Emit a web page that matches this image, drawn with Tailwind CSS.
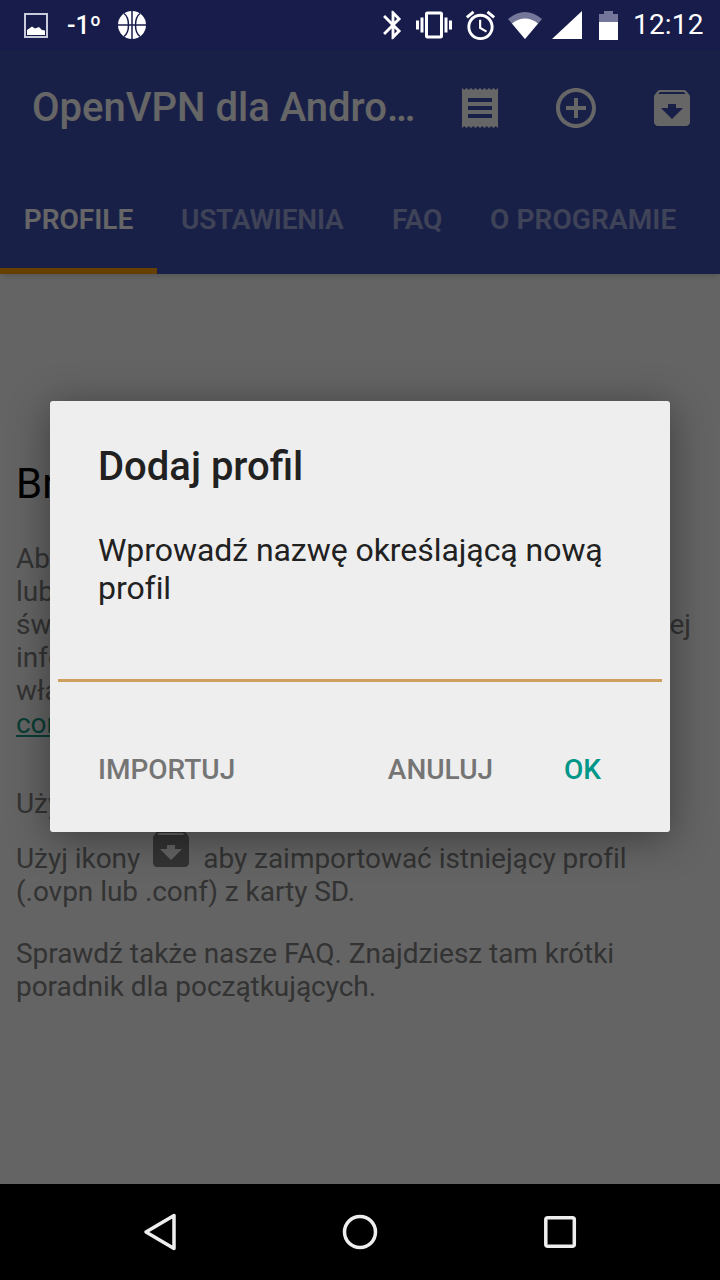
<!DOCTYPE html>
<html lang="pl">
<head>
    <meta charset="UTF-8">
    <meta name="viewport" content="width=device-width, initial-scale=1.0">
    <title>OpenVPN dla Androida</title>
    <script src="https://cdn.jsdelivr.net/npm/@tailwindcss/browser@4"></script>
</head>
<body class="bg-black">
<div class="relative flex flex-col w-[720px] h-[1280px] overflow-hidden font-[Roboto,sans-serif]">

    <!-- Status bar -->
    <div class="flex items-center h-[50px] shrink-0 bg-[#181c4a] text-white relative z-20">
        <svg class="ml-[24px] w-[24px] h-[25px]" viewBox="0 0 24 25">
            <rect x="1" y="1" width="22" height="23" fill="none" stroke="#c9cbdc" stroke-width="2"/>
            <path d="M3 22v-5l5-3.5 3 2 4-1.500 3 3 3 .5V22z" fill="#fff"/>
        </svg>
        <span class="ml-[19px] w-[36px] text-[25px] leading-none font-medium whitespace-nowrap">-1º</span>
        <svg class="ml-[15px] w-[28px] h-[28px]" viewBox="0 0 28 28">
            <circle cx="14" cy="14" r="14" fill="#fff"/>
            <path d="M0 14h28M14 0v28M6 2.500c4 3 4.500 7.500 4.500 11.500s-.5 8.500-4.500 11.500M22 2.500c-4 3-4.500 7.500-4.500 11.500s.5 8.500 4.500 11.500" fill="none" stroke="#181c4a" stroke-width="1.500"/>
        </svg>
        <svg class="ml-[230px] w-[34px] h-[34px] fill-white" viewBox="0 0 24 24"><path d="M17.710 7.710L12 2h-1v7.590L6.410 5 5 6.410 10.590 12 5 17.590 6.410 19 11 14.410V22h1l5.710-5.710-4.300-4.290 4.300-4.290zM13 5.830l1.880 1.880L13 9.590V5.830zm1.880 10.460L13 18.170v-3.760l1.880 1.880z"/></svg>
        <svg class="ml-[6px] w-[36px] h-[36px] fill-white" viewBox="0 0 24 24"><path d="M0 15h2V9H0v6zm3 2h2V7H3v10zm19-8v6h2V9h-2zm-3 8h2V7h-2v10zM16.500 3h-9C6.670 3 6 3.670 6 4.500v15c0 .83.67 1.500 1.500 1.500h9c.83 0 1.500-.67 1.500-1.500v-15c0-.83-.67-1.500-1.500-1.500zM16 19H8V5h8v14z"/></svg>
        <svg class="ml-[11px] w-[35px] h-[35px] fill-white" viewBox="0 0 24 24"><path d="M22 5.720l-4.600-3.860-1.290 1.530 4.600 3.860L22 5.720zM7.880 3.390L6.600 1.860 2 5.710l1.290 1.530 4.590-3.850zM12.500 8H11v6l4.750 2.850.75-1.230-4-2.370V8zM12 4c-4.970 0-9 4.030-9 9s4.030 9 9 9 9-4.030 9-9-4.030-9-9-9zm0 16c-3.870 0-7-3.130-7-7s3.130-7 7-7 7 3.130 7 7-3.130 7-7 7z"/></svg>
        <svg class="ml-[10px] w-[34px] h-[28px]" viewBox="0 0 34 28">
            <path d="M0 8Q17-6 34 8L17 28Z" fill="#74779a"/>
            <path d="M4 12.500Q17 2.500 30 12.500L17 28Z" fill="#fff"/>
        </svg>
        <svg class="ml-[10px] w-[30px] h-[28px]" viewBox="0 0 30 28"><path d="M30 0V28H0Z" fill="#fff"/></svg>
        <svg class="ml-[17px] w-[19px] h-[29px]" viewBox="0 0 19 29">
            <path d="M0 3h5V0h9v3h5v9H0z" fill="#74779a"/>
            <path d="M0 11h19v18H0z" fill="#fff"/>
        </svg>
        <span class="ml-[15px] text-[28px] leading-none tracking-[0.2px] whitespace-nowrap">12:12</span>
    </div>

    <!-- App bar + tabs -->
    <div class="h-[224px] shrink-0 flex flex-col bg-[#3f51b5] shadow-md relative z-0">
        <div class="flex items-center h-[116px]">
            <span class="ml-[32px] w-[424px] text-[40px] leading-none font-medium text-white whitespace-nowrap">OpenVPN dla Andro…</span>
            <svg class="w-[36px] h-[40px] ml-[6px] fill-white" viewBox="0 0 36 40">
                <path fill-rule="evenodd" d="M0 0l2.250 2 2.250-2 2.250 2 2.250-2 2.250 2 2.250-2 2.250 2 2.250-2 2.250 2 2.250-2 2.250 2 2.250-2 2.250 2 2.250-2 2.250 2 2.250-2V40l-2.250-2-2.250 2-2.250-2-2.250 2-2.250-2-2.250 2-2.250-2-2.250 2-2.250-2-2.250 2-2.250-2-2.250 2-2.250-2-2.250 2-2.250-2-2.250 2zM6 10v4h24v-4zM6 18v4h24v-4zM6 26v4h24v-4z"/>
            </svg>
            <svg class="w-[48px] h-[48px] ml-[54px] fill-white" viewBox="0 0 24 24"><path d="M13 7h-2v4H7v2h4v4h2v-4h4v-2h-4V7zm-1-5C6.480 2 2 6.480 2 12s4.480 10 10 10 10-4.480 10-10S17.520 2 12 2zm0 18c-4.410 0-8-3.590-8-8s3.590-8 8-8 8 3.590 8 8-3.590 8-8 8z"/></svg>
            <svg class="w-[48px] h-[48px] ml-[48px] fill-white" viewBox="0 0 24 24"><path d="M20.540 5.230l-1.390-1.680C18.880 3.210 18.470 3 18 3H6c-.47 0-.88.21-1.160.55L3.460 5.230C3.170 5.570 3 6.020 3 6.500V19c0 1.100.9 2 2 2h14c1.100 0 2-.9 2-2V6.500c0-.48-.17-.93-.46-1.270zM12 17.500L6.500 12H10v-2h4v2h3.500L12 17.500zM5.120 5l.81-1h12l.94 1H5.120z"/></svg>
        </div>
        <div class="flex h-[108px] text-[28px] font-semibold leading-none tracking-[-0.2px] whitespace-nowrap">
            <div class="w-[157px] flex items-center justify-center border-b-[6px] border-[#ffa000] text-white pt-[6px] tracking-normal">PROFILE</div>
            <div class="flex items-center ml-[24px] w-[211px] text-white/50">USTAWIENIA</div>
            <div class="flex items-center w-[98px] text-white/50">FAQ</div>
            <div class="flex items-center text-white/50 tracking-[0.1px]">O PROGRAMIE</div>
        </div>
    </div>

    <!-- Page content -->
    <div class="flex-1 bg-[#fafafa] text-[28px] leading-[33px] tracking-[-0.04px] text-[#808080] pl-[16px] pr-[29px] pt-[185px] whitespace-nowrap">
        <h2 class="text-[42px] leading-[48px] mt-[1px] text-black">Brak profilu VPN</h2>
        <div class="mt-[34px]">Aby rozpocząć, musisz mieć profil OpenVPN</div>
        <div>lub plik konfiguracyjny od dostawcy VPN,</div>
        <div class="flex justify-between"><span>świadectwa i klucze klienta. Więcej</span><span>więcej</span></div>
        <div>informacji znajdziesz w poradniku</div>
        <div>właściciela serwera lub na stronie</div>
        <div class="text-[#1a9a85] underline">community.openvpn.net</div>
        <div class="mt-[47px]">Użyj ikony aby dodać nowy profil</div>
        <div class="mt-[22px] flex items-center h-[33px]">
            <span>Użyj ikony</span>
            <svg class="w-[48px] h-[48px] ml-[7px] mr-[8px] -mt-[20px] fill-[#808080]" viewBox="0 0 24 24"><path d="M20.540 5.230l-1.390-1.680C18.880 3.210 18.470 3 18 3H6c-.47 0-.88.21-1.160.55L3.460 5.230C3.170 5.570 3 6.020 3 6.500V19c0 1.100.9 2 2 2h14c1.100 0 2-.9 2-2V6.500c0-.48-.17-.93-.46-1.270zM12 17.500L6.500 12H10v-2h4v2h3.500L12 17.500zM5.120 5l.81-1h12l.94 1H5.120z"/></svg>
            <span>aby zaimportować istniejący profil</span>
        </div>
        <div>(.ovpn lub .conf) z karty SD.</div>
        <div class="mt-[29px]">Sprawdź także nasze FAQ. Znajdziesz tam krótki</div>
        <div>poradnik dla początkujących.</div>
    </div>

    <!-- Navigation bar -->
    <div class="h-[96px] shrink-0 bg-black flex items-center justify-center gap-[160px] relative z-20">
        <svg class="w-[40px] h-[40px]" viewBox="0 0 40 40"><path d="M6 20L34 3.500V36.500Z" fill="none" stroke="#eee" stroke-width="3.500" stroke-linejoin="round"/></svg>
        <svg class="w-[40px] h-[40px]" viewBox="0 0 40 40"><circle cx="20" cy="20" r="15.500" fill="none" stroke="#eee" stroke-width="3.500"/></svg>
        <svg class="w-[40px] h-[40px]" viewBox="0 0 40 40"><rect x="5.800" y="5.800" width="28.500" height="28.500" rx="2" fill="none" stroke="#eee" stroke-width="3.500"/></svg>
    </div>

    <!-- Scrim -->
    <div class="absolute left-0 right-0 top-[50px] bottom-[96px] bg-black/60 z-10"></div>

    <!-- Dialog -->
    <div class="absolute left-[50px] top-[401px] w-[620px] h-[431px] z-10 flex flex-col bg-[#eeeeee] rounded-[3px] shadow-[0_6px_40px_rgba(0,0,0,0.4)]">
        <h3 class="ml-[48px] mt-[42px] text-[40px] leading-[48px] font-medium text-[#212121]">Dodaj profil</h3>
        <p class="ml-[48px] mt-[40px] text-[32px] leading-[38px] tracking-[-0.06px] text-[#212121] w-[530px]">Wprowadź nazwę określającą nową<br>profil</p>
        <div class="mx-[8px] mt-[72px] h-[3px] bg-[#cf9f5f]"></div>
        <div class="flex items-center mt-[74px] text-[28px] leading-none font-medium text-[#757575]">
            <span class="ml-[48px]">IMPORTUJ</span>
            <span class="ml-auto">ANULUJ</span>
            <span class="ml-[71px] mr-[69px] text-[#009688]">OK</span>
        </div>
    </div>
</div>
</body>
</html>
